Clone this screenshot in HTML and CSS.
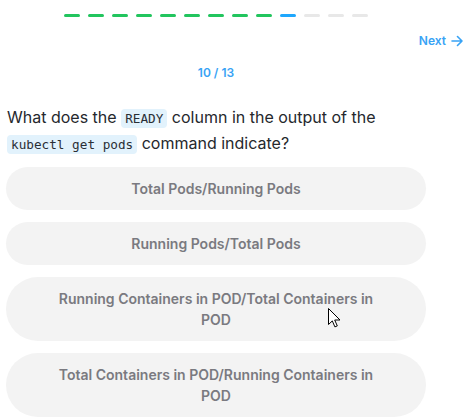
FILE: index.html
```html
<!DOCTYPE html>
<html lang="en">
<head>
<meta charset="utf-8">
<title>Quiz</title>
<link rel="stylesheet" href="styles.css">
</head>
<body>
<div class="page">
  <div class="quiz">
    <div class="progress">
      <span class="dash done"></span><span class="dash done"></span><span class="dash done"></span><span class="dash done"></span><span class="dash done"></span><span class="dash done"></span><span class="dash done"></span><span class="dash done"></span><span class="dash done"></span><span class="dash current"></span><span class="dash"></span><span class="dash"></span><span class="dash"></span>
    </div>
  </div>
  <div class="nav-row">
    <a class="next" href="#">Next
      <svg class="arrow" width="12" height="12" viewBox="0 0 12 12" aria-hidden="true"><path d="M1 6h10M6.5 1.5L11 6l-4.5 4.5" fill="none" stroke="currentColor" stroke-width="1.6" stroke-linecap="round" stroke-linejoin="round"/></svg>
    </a>
  </div>
  <div class="quiz">
    <div class="counter">10 / 13</div>
    <p class="question">What does the <code>READY</code> column in the output of the <code>kubectl get pods</code> command indicate?</p>
    <div class="options">
      <button class="option">Total Pods/Running Pods</button>
      <button class="option">Running Pods/Total Pods</button>
      <button class="option">Running Containers in POD/Total Containers in POD</button>
      <button class="option">Total Containers in POD/Running Containers in POD</button>
    </div>
  </div>
  <svg class="cursor" width="13" height="20" viewBox="0 0 13 20" aria-hidden="true"><path d="M0.5 0.5v16l3.8-3.6 2.6 6 2.4-1-2.6-5.9h5.3z" fill="#fff" stroke="#000" stroke-width="1" stroke-linejoin="round"/></svg>
</div>
</body>
</html>
```

FILE: styles.css
```css
* { box-sizing: border-box; }
html, body { margin: 0; padding: 0; background: #fff; }
body { font-family: Inter, "Noto Sans", sans-serif; }
.page { position: relative; width: 471px; height: 420px; overflow: hidden; }
.quiz { width: 420px; margin-left: 6px; }
.progress { display: flex; justify-content: center; gap: 8px; padding-top: 14px; }
.dash { width: 16px; height: 3px; border-radius: 2px; background: #e8e8e8; }
.dash.done { background: #22c55e; }
.dash.current { background: #1ea7fd; }
.nav-row { display: flex; justify-content: flex-end; padding: 16px 8px 0 0; }
.next { display: flex; align-items: center; gap: 5px; color: #38a3f5; font-size: 12px; line-height: 16px; font-weight: 600; text-decoration: none; }
.arrow { display: block; }
.counter { margin-top: 16px; text-align: center; color: #38a3f5; font-size: 12px; line-height: 16px; font-weight: 600; }
.question { margin: 24px 0 0 0; font-size: 16px; line-height: 25px; color: #25282d; padding-left: 1px; }
.question code { font-family: "DejaVu Sans Mono", "Liberation Mono", monospace; font-size: 12.7px; background: #e2f2fc; color: #2a2f36; padding: 2px 4px; border-radius: 4px; }
.options { display: flex; flex-direction: column; gap: 12px; margin-top: 10px; }
.option { font-family: Inter, "Noto Sans", sans-serif; border: 0; background: #f3f3f3; border-radius: 9999px; padding: 11px 48px; font-size: 14px; line-height: 21px; font-weight: 600; color: #7a7a80; text-align: center; }
.cursor { position: absolute; left: 328px; top: 308px; }
```
